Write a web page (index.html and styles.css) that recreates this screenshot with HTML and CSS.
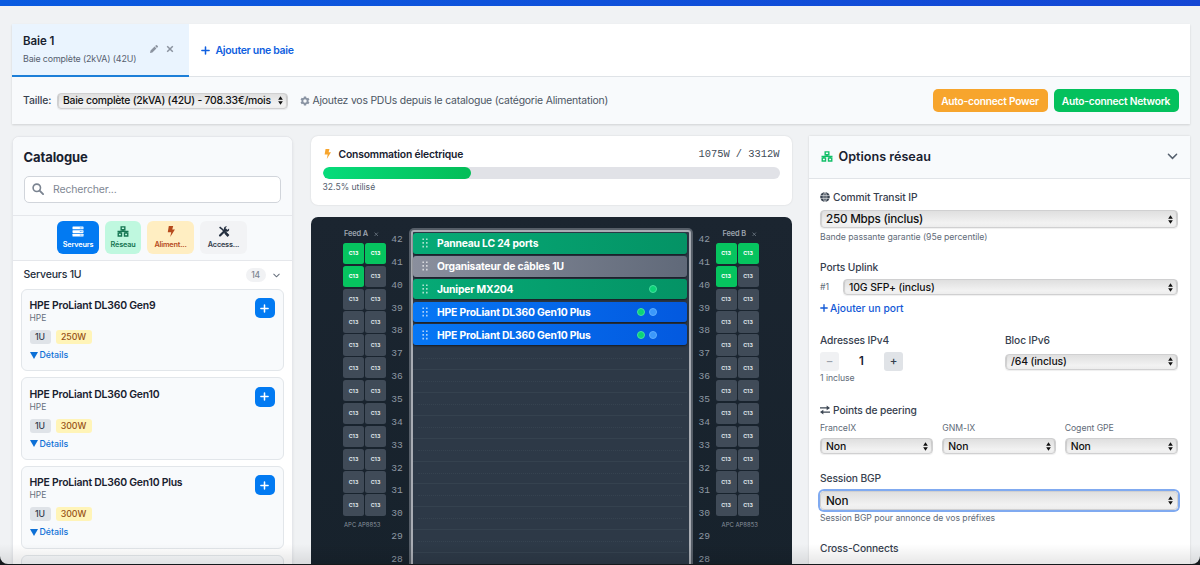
FILE: index.html
```
<!DOCTYPE html>
<html lang="fr">
<head>
<meta charset="utf-8">
<title>Configurateur de baie</title>
<link rel="stylesheet" href="styles.css">
</head>
<body>
<svg class="defs" width="0" height="0">
  <symbol id="net" viewBox="0 0 12 12"><path d="M4 .9h4v3.2H4zM.8 7.7h3.6v3.2H.8zM7.6 7.7h3.6v3.2H7.6zM6 4.1v1.8M0 5.9h12M2.6 5.9v1.8M9.4 5.9v1.8" fill="none" stroke="currentColor" stroke-width="1.5"/></symbol>
  <symbol id="bolt" viewBox="0 0 10 14"><path d="M2.2 0h5.6L6.600 4.400H10L4 14l1.300-6.200H.9z" fill="currentColor"/></symbol>
  <symbol id="updown" viewBox="0 0 6 10"><path d="M3 0l2.800 4H.2zM3 10L.2 6h5.600z" fill="#111"/></symbol>
  <symbol id="plus" viewBox="0 0 10 10"><path d="M5 1v8M1 5h8" stroke="currentColor" stroke-width="1.700" stroke-linecap="round"/></symbol>
  <symbol id="cross" viewBox="0 0 8 8"><path d="M1.200 1.200l5.600 5.600M6.800 1.200L1.200 6.800" stroke="currentColor" stroke-width="1.500"/></symbol>
  <symbol id="chev" viewBox="0 0 12 8"><path d="M1.300 1.500L6 6.200l4.700-4.700" fill="none" stroke="currentColor" stroke-width="1.800" stroke-linecap="round"/></symbol>
</svg>
<div class="window">
  <div class="topbar"></div>
  <section class="shell">
    <div class="tabs">
      <div class="tab">
        <div><div class="tab-name">Baie 1</div><div class="tab-sub">Baie complète (2kVA) (42U)</div></div>
        <svg class="pencil" viewBox="0 0 10 10"><path d="M0 10l.7-3L5.700 2 8 4.300 3 9.300zM6.400 1.300L7.500.2q.6-.4 1.100 0L9.800 1.400q.4.500 0 1L8.700 3.600z" fill="#8b939f"/></svg>
        <svg class="close"><use href="#cross"/></svg>
      </div>
      <div class="add-tab"><svg><use href="#plus"/></svg>Ajouter une baie</div>
    </div>
    <div class="toolbar">
      <span class="size-label">Taille:</span>
      <div class="select size-select">Baie complète (2kVA) (42U) - 708.33€/mois<svg><use href="#updown"/></svg></div>
      <svg class="gear" viewBox="0 0 20 20"><path d="M10 1v18M2.200 5.500l15.600 9M17.800 5.500L2.200 14.500" stroke="#8a94a3" stroke-width="4.600"/><circle cx="10" cy="10" r="5.200" fill="#f8fafc" stroke="#8a94a3" stroke-width="3.500"/></svg>
      <span class="tip">Ajoutez vos PDUs depuis le catalogue (catégorie Alimentation)</span>
      <button class="btn power">Auto-connect Power</button>
      <button class="btn network">Auto-connect Network</button>
    </div>
  </section>
  <main class="columns">
    <aside class="catalog">
      <div class="cat-head">
        <h2>Catalogue</h2>
        <div class="search"><svg viewBox="0 0 12 12"><circle cx="4.800" cy="4.800" r="3.700" fill="none" stroke="#7b8491" stroke-width="1.600"/><path d="M7.600 7.600l3.500 3.500" stroke="#7b8491" stroke-width="1.900" stroke-linecap="round"/></svg>Rechercher...</div>
      </div>
      <div class="cats">
        <div class="cat servers"><svg viewBox="0 0 12 12"><g fill="#fff"><rect y=".6" width="12" height="3" rx=".6"/><rect y="4.500" width="12" height="3" rx=".6"/><rect y="8.400" width="12" height="3" rx=".6"/></g><path d="M8 2.100h1m.8 0h1M8 6h1m.8 0h1M8 9.900h1m.8 0h1" stroke="#027af2" stroke-width=".8"/></svg>Serveurs</div>
        <div class="cat reseau"><svg><use href="#net"/></svg>Réseau</div>
        <div class="cat alim"><svg><use href="#bolt"/></svg>Aliment...</div>
        <div class="cat access"><svg viewBox="0 0 12 12"><path d="M1.200 1.200l3.200 2.600L10.500 10.300" stroke="#253040" stroke-width="1.800" fill="none"/><path d="M7.300 7.300l3.600 3.600" stroke="#253040" stroke-width="2.800"/><path d="M1.700 10.300L8 4" stroke="#253040" stroke-width="2.400" stroke-linecap="round"/><path d="M11.500 2.700A2.900 2.900 0 1 1 9.200.5L7.800 2v2.200H10z" fill="#253040"/></svg>Access...</div>
      </div>
      <div class="group"><span>Serveurs 1U</span><span class="count">14</span><svg viewBox="0 0 12 8"><use href="#chev"/></svg></div>
      <div class="products" id="products"></div>
    </aside>
    <section class="middle">
      <div class="usage">
        <div class="usage-head"><svg><use href="#bolt"/></svg><b>Consommation électrique</b><span>1075W / 3312W</span></div>
        <div class="bar"><div class="fill" style="width:32.5%"></div></div>
        <div class="usage-note">32.5% utilisé</div>
      </div>
      <div class="rack">
        <div class="feed" id="feedA"></div>
        <div class="nums" id="numsA"></div>
        <div class="frame"><div class="slots" id="slots"></div></div>
        <div class="nums right" id="numsB"></div>
        <div class="feed right" id="feedB"></div>
      </div>
    </section>
    <aside class="options">
      <div class="opt-head"><svg class="net"><use href="#net"/></svg><h2>Options réseau</h2><svg class="arrow" viewBox="0 0 12 8"><use href="#chev"/></svg></div>
      <div class="opt-body">
        <div class="label"><svg viewBox="0 0 12 12"><circle cx="6" cy="6" r="5.800" fill="#3b4552"/><path d="M0 4.200h12M0 7.800h12M6 0v12M6 .3C3 3 3 9 6 11.700M6 .3C9 3 9 9 6 11.700" stroke="#fff" stroke-width=".6" fill="none"/></svg>Commit Transit IP</div>
        <div class="select big">250 Mbps (inclus)<svg><use href="#updown"/></svg></div>
        <div class="hint h1">Bande passante garantie (95e percentile)</div>
        <div class="label">Ports Uplink</div>
        <div class="port"><span>#1</span><div class="select">10G SFP+ (inclus)<svg><use href="#updown"/></svg></div></div>
        <div class="add-port"><svg><use href="#plus"/></svg>Ajouter un port</div>
        <div class="ips">
          <div><div class="label">Adresses IPv4</div>
            <div class="stepper"><i class="off">−</i><b>1</b><i>+</i></div>
            <div class="hint">1 incluse</div></div>
          <div><div class="label">Bloc IPv6</div><div class="select ip6">/64 (inclus)<svg><use href="#updown"/></svg></div></div>
        </div>
        <div class="label"><svg viewBox="0 0 12 12"><path d="M0 3.500h9M12 8.500H3" stroke="#3b4552" stroke-width="1.600"/><path d="M8 .6l4 2.900-4 2.900zM4 5.600L0 8.500l4 2.900z" fill="#3b4552"/></svg>Points de peering</div>
        <div class="peers">
          <div><div class="hint">FranceIX</div><div class="select">Non<svg><use href="#updown"/></svg></div></div>
          <div><div class="hint">GNM-IX</div><div class="select">Non<svg><use href="#updown"/></svg></div></div>
          <div><div class="hint">Cogent GPE</div><div class="select">Non<svg><use href="#updown"/></svg></div></div>
        </div>
        <div class="label">Session BGP</div>
        <div class="select big focus">Non<svg><use href="#updown"/></svg></div>
        <div class="hint h2">Session BGP pour annonce de vos préfixes</div>
        <div class="label">Cross-Connects</div>
      </div>
    </aside>
  </main>
  <div class="shade"></div>
</div>
<script src="script.js"></script>
</body>
</html>
```
FILE: styles.css
```
* { box-sizing: border-box; }
body { margin: 0; height: 565px; overflow: hidden; background: #15191c; font-family: Inter, "Liberation Sans", sans-serif; color: #18212f; }
h2 { margin: 0; }
svg { display: block; flex: none; overflow: visible; }
.defs { position: absolute; }
.window { position: relative; height: 563.5px; overflow: hidden; background: #f0f2f4; border-radius: 0 0 8px 8px; }
.topbar { height: 6px; background: linear-gradient(90deg, #0a5be0, #1447d4); }
.shell { margin: 18px 10px 0 12px; height: 100px; background: #fff; box-shadow: 0 1px 2px #0002; }
.tabs { display: flex; height: 53px; border-bottom: 1px solid #dfe3e7; }
.tab { display: flex; width: 177px; height: 53px; padding: 9px 0 0 11px; background: #eaf4fe; border-bottom: 2px solid #1d7fd8; }
.tab > div { width: 127px; white-space: nowrap; }
.tab-name { font-size: 11.5px; line-height: 17px; font-weight: 600; letter-spacing: -.1px; }
.tab-sub { font-size: 8.9px; line-height: 18px; color: #56606e; letter-spacing: -.15px; }
.pencil { width: 8px; height: 8px; margin-top: 12px; }
.close { width: 8px; height: 8px; margin: 12px 0 0 8px; color: #8b939f; }
.add-tab { display: flex; align-items: center; gap: 6px; padding-left: 11.5px; font-size: 10.5px; letter-spacing: -.32px; font-weight: 600; color: #0f5fe0; }
.add-tab svg { width: 9px; height: 9px; }
.toolbar { display: flex; align-items: center; height: 47px; padding: 0 11.5px 0 11px; background: #f8fafc; font-size: 10.4px; white-space: nowrap; }
.size-label { width: 34px; font-weight: 500; letter-spacing: -.1px; color: #36404e; }
.select { display: flex; align-items: center; height: 16px; padding: 0 4px 0 5px; border: 1px solid #d0d0d1; border-radius: 4px; background: linear-gradient(#dfdfdf, #f2f2f2 75%, #ededed); box-shadow: inset 2px 0 1px -1px #0002, inset -2px 0 1px -1px #0002, 0 1px 1px #0001; color: #111; font-size: 10.4px; letter-spacing: -.1px; font-weight: 500; white-space: nowrap; }
.select svg { width: 5px; height: 9px; margin-left: auto; }
.size-select { width: 231px; letter-spacing: -.25px; }
.gear { width: 10px; height: 10px; margin: 0 2.5px 0 12px; }
.tip { color: #4b5563; letter-spacing: -.19px; }
.btn { height: 23px; padding: 0; border: 0; border-radius: 5px; color: #fff; font: 600 10.2px Inter, sans-serif; letter-spacing: -.23px; white-space: nowrap; }
.power { width: 115px; margin-left: auto; background: #f7a52d; }
.network { width: 125px; margin-left: 6px; background: #04c15d; }
.columns { display: flex; margin-top: 11.5px; height: 430px; }
.catalog { width: 281px; margin-left: 11.5px; background: #fff; border: 1px solid #e5e7eb; border-radius: 7px 7px 0 0; box-shadow: 0 1px 3px #0001; }
.cat-head { height: 79px; padding: 10px 11px; background: #f8fafc; border-bottom: 1px solid #e5e7eb; border-radius: 7px 7px 0 0; }
.cat-head h2 { font-size: 13px; line-height: 20px; font-weight: 700; letter-spacing: -.1px; }
.search { display: flex; align-items: center; gap: 9px; width: 257.5px; height: 27px; margin-top: 9px; padding-left: 7.5px; background: #fff; border: 1px solid #d1d5db; border-radius: 5px; font-size: 10.5px; letter-spacing: -.15px; color: #7f8894; }
.search svg { width: 12px; height: 12px; }
.cats { display: flex; gap: 6px; height: 45px; padding: 5px 0 0 44.5px; background: #f8fafc; border-bottom: 1px solid #e5e7eb; }
.cat { display: flex; flex-direction: column; align-items: center; height: 33px; padding-top: 5px; border-radius: 6px; font-size: 7.3px; letter-spacing: -.18px; font-weight: 600; line-height: 13px; }
.cat svg { width: 12px; height: 11px; margin-bottom: 1px; }
.servers { width: 42px; background: #027af2; color: #fff; }
.reseau { width: 36px; background: #bff8df; color: #167552; }
.alim { width: 47px; background: #ffeec2; color: #b64a1c; }
.access { width: 47px; background: #f2f3f5; color: #36404e; }
.group { display: flex; align-items: center; height: 28px; padding: 0 11px; font-size: 10.5px; letter-spacing: -.2px; font-weight: 500; color: #232d3b; }
.count { width: 20px; height: 14px; margin-left: auto; background: #f1f2f4; border-radius: 7px; font-size: 8.500px; line-height: 14px; text-align: center; color: #7b8491; }
.group svg { width: 7px; height: 5px; margin: 1px 1px 0 7px; color: #68717e; }
.products { display: grid; gap: 6px; padding: 0 8px; grid-auto-rows: 82.700px; }
.product { display: flex; justify-content: space-between; padding: 8.500px 8px; background: #f8fafc; border: 1px solid #e2e6ea; border-radius: 6px; }
.p-name { font-size: 10.450px; line-height: 15px; font-weight: 600; letter-spacing: -.230px; }
.p-brand { font-size: 8.500px; line-height: 10px; color: #66707d; }
.badges { display: flex; gap: 5px; margin: 7px 0 4px; font-size: 8.800px; font-weight: 500; line-height: 14px; text-align: center; color: #36404e; letter-spacing: -.1px; }
.badges span { width: 21px; background: #dfe3e8; border-radius: 3px; }
.badges .watt { width: 36px; background: #fff4b8; color: #965015; }
.details { display: flex; align-items: center; gap: 2px; font-size: 8.800px; line-height: 14px; font-weight: 500; color: #0d70d6; }
.details::before { content: ""; border: 4px solid transparent; border-top: 7px solid #0d70d6; border-bottom: 0; }
.add { display: grid; place-items: center; width: 20px; height: 20px; background: #027af2; border-radius: 5px; color: #fff; }
.add svg { width: 9px; height: 9px; }
.middle { width: 481px; margin-left: 18px; }
.usage { height: 69px; padding: 10px 12px; background: #fff; border-radius: 7px; box-shadow: 0 0 2px #0002; }
.usage-head { display: flex; align-items: center; height: 17px; font-size: 10.350px; }
.usage-head svg { width: 7px; height: 10px; margin-right: 8px; margin-left: 1px; color: #f7a52d; }
.usage-head b { font-weight: 600; letter-spacing: -.180px; }
.usage-head span { margin-left: auto; font: 10.400px "Liberation Mono", monospace; color: #414b58; }
.bar { height: 12px; margin-top: 4px; overflow: hidden; background: #e1e2e7; border-radius: 6px; }
.fill { height: 100%; background: linear-gradient(90deg, #06dc7b, #04bd58); border-radius: 6px; }
.usage-note { font-size: 8.600px; line-height: 17px; color: #56606e; }
.rack { display: flex; height: 360px; margin-top: 12.500px; padding: 11px 0 0 32.500px; background: linear-gradient(#1b2530, #17222c); border-radius: 7px 7px 0 0; }
.feed { width: 42.500px; }
.feed-name { display: flex; align-items: center; gap: 6px; height: 11.500px; padding-left: 1px; font-size: 7.400px; font-weight: 600; letter-spacing: -.1px; color: #9ba3ad; }
.feed-name svg { width: 4.500px; height: 4.500px; color: #727d89; }
.outlets { display: grid; grid-template-columns: 21px 21px; grid-auto-rows: 21.370px; gap: 1.500px 1px; margin-top: 3.300px; }
.outlet { display: grid; place-items: center; background: #404b58; border-radius: 2.500px; color: #dee2e7; font-size: 5.300px; font-weight: 700; }
.outlet.on { background: #06c45f; color: #fff; }
.model { margin: 5px 0 0 1px; font-size: 5.950px; line-height: 8px; white-space: nowrap; color: #87919c; }
.right .model { text-align: right; }
.right .feed-name { padding-left: 7px; }
.nums { width: 23px; font: 9.600px "Liberation Mono", monospace; text-align: center; color: #8f99a4; }
.nums div { height: 22.870px; line-height: 23px; }
.nums.right { width: 22.500px; }
.frame { width: 284.500px; height: 370px; padding: 2px 2px 0; background: #565e68; border-radius: 5px 5px 0 0; }
.slots { height: 100%; padding: 1px 2px 0 0; border: 2px solid #a9adb4; border-width: 2px 2px 0; border-radius: 3px 3px 0 0; background: #2d3947; }
.slot { height: 22.870px; padding-bottom: 2.200px; }
.slot.empty { border-bottom: 1px solid #35424f; }
.slot.empty::before { content: ""; display: block; margin: 0 5px; padding-top: 11px; border-bottom: 1px dotted #364350; }
.unit { display: flex; align-items: center; gap: 4px; height: 100%; padding: 0 30px 0 9.500px; border-radius: 3px; color: #fff; font-size: 10.350px; letter-spacing: -.190px; box-shadow: 0 1px 2px #0008; white-space: nowrap; }
.unit .grip { width: 6px; height: 10px; margin-right: 5px; }
.unit b { font-weight: 700; margin-right: auto; }
.green { background: linear-gradient(90deg, #06aa76, #049365); }
.grey { background: linear-gradient(90deg, #8a8f9d, #606979); }
.blue { background: linear-gradient(90deg, #0677f5, #0359df); }
.dot { width: 8px; height: 8px; border-radius: 50%; background: #0bd477; border: 1px solid #45dfa0; }
.dot.b { background: #3b98fa; border-color: #5cacff; }
.options { width: 381.500px; margin-left: 17px; background: #fff; box-shadow: 0 0 2px #0002; }
.opt-head { display: flex; align-items: center; height: 43px; padding: 0 12px; background: #f8fafc; border-bottom: 1px solid #e1e4e8; }
.opt-head h2 { margin-left: 6px; font-size: 12.600px; line-height: 18px; font-weight: 600; }
.net { width: 12px; height: 11px; color: #10bf67; }
.arrow { width: 11px; height: 7px; margin-left: auto; color: #56606e; }
.opt-body { padding: 10.500px 12px 0 11.500px; }
.label { display: flex; align-items: center; gap: 3px; height: 16px; font-size: 10.250px; letter-spacing: -.120px; font-weight: 500; color: #36404e; white-space: nowrap; }
.label svg { width: 10px; height: 10px; }
.hint { height: 14px; font-size: 8.700px; line-height: 14px; letter-spacing: -.050px; color: #616b78; white-space: nowrap; }
.big { height: 18px; margin-top: 5px; font-size: 11.700px; letter-spacing: -.240px; }
.h1 { margin: 1.500px 0 15px; }
.port { display: flex; align-items: center; margin-top: 4.500px; font-size: 8.700px; color: #616b78; }
.port span { width: 23px; }
.port .select { flex: 1; }
.add-port { display: flex; align-items: center; gap: 2px; height: 16px; margin: 4.500px 0 16px; font-size: 10.250px; font-weight: 500; color: #1259d6; }
.add-port svg { width: 8px; height: 8px; }
.ips { display: grid; grid-template-columns: 185px 1fr; height: 70px; }
.ip6 { margin-top: 6px; }
.stepper { display: flex; margin: 4.500px 0 -.5px; width: 83px; justify-content: space-between; line-height: 19px; text-align: center; font-size: 11.500px; }
.stepper i { width: 19px; height: 19px; border-radius: 3px; background: #e0e3e7; font-style: normal; font-weight: 500; color: #36404e; }
.stepper .off { background: #f0f1f3; color: #9aa1ab; }
.stepper b { font-weight: 600; }
.peers { display: grid; grid-template-columns: repeat(3, 1fr); gap: 9px; margin: 3px 0 16px; }
.peers .select { margin-top: 3.500px; }
.focus { height: 19px; margin-top: 5px; box-shadow: 0 0 0 2px #80aaf0; }
.h2 { margin: 1px 0 15px; }
.shade { position: absolute; inset: auto 0 0; height: 20px; background: linear-gradient(transparent, #00000018); }
```
FILE: script.js
```
const icon = id => `<svg><use href="#${id}"/></svg>`;
const byId = id => document.getElementById(id);

byId("products").innerHTML = [["HPE ProLiant DL360 Gen9", 250], ["HPE ProLiant DL360 Gen10", 300], ["HPE ProLiant DL360 Gen10 Plus", 300], ["", 0]]
  .map(([name, watts]) => `<div class="product">${name ? `<div><div class="p-name">${name}</div><div class="p-brand">HPE</div><div class="badges"><span>1U</span><span class="watt">${watts}W</span></div><div class="details">Détails</div></div><div class="add">${icon("plus")}</div>` : ""}</div>`).join("");

for (const side of ["A", "B"]) {
  let outlets = "";
  for (let i = 0; i < 24; i++) outlets += `<div class="outlet${i < 3 ? " on" : ""}">C13</div>`;
  byId("feed" + side).innerHTML = `<div class="feed-name">Feed ${side}<svg viewBox="0 0 8 8"><path d="M1 1l6 6M7 1L1 7" stroke="currentColor" stroke-width="1.400"/></svg></div><div class="outlets">${outlets}</div><div class="model">APC AP8853</div>`;
  let nums = "";
  for (let n = 42; n >= 28; n--) nums += `<div>${n}</div>`;
  byId("nums" + side).innerHTML = nums;
}

const grip = '<svg class="grip" viewBox="0 0 6 10"><path d="M1.200 .4v10M4.800 .4v10" stroke="#ffffffa8" stroke-width="1.600" stroke-dasharray="1.700 2"/></svg>';
const units = [["green", "Panneau LC 24 ports", ""], ["grey", "Organisateur de câbles 1U", ""], ["green", "Juniper MX204", "g"], ["blue", "HPE ProLiant DL360 Gen10 Plus", "gb"], ["blue", "HPE ProLiant DL360 Gen10 Plus", "gb"]];
byId("slots").innerHTML = units.map(([color, name, dots]) => `<div class="slot"><div class="unit ${color}">${grip}<b>${name}</b>${[...dots].map(d => `<span class="dot ${d}"></span>`).join("")}</div></div>`).join("")
  + '<div class="slot empty"></div>'.repeat(10);
```
